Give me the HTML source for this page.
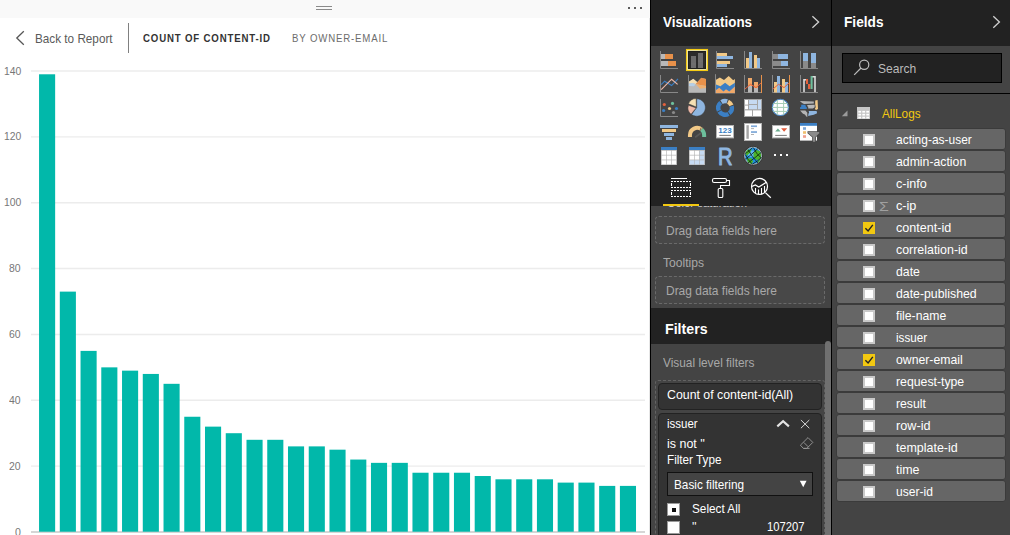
<!DOCTYPE html>
<html lang="en">
<head>
<meta charset="utf-8">
<title>Power BI - Count of content-id by owner-email</title>
<style>
html,body{margin:0;padding:0;background:#fff;}
body{width:1010px;height:535px;overflow:hidden;font-family:"Liberation Sans",sans-serif;}
#app{position:relative;width:1010px;height:535px;overflow:hidden;background:#fff;}
.a{position:absolute;}
.t{position:absolute;white-space:pre;line-height:20px;transform-origin:0 50%;}
svg{position:absolute;left:0;top:0;overflow:visible;}
.fi{left:836px;width:170px;height:22px;box-sizing:border-box;background:#666;border:1px solid #3b3b3b;border-radius:3px;}
.cb{width:12px;height:12px;box-sizing:border-box;background:#fff;border:2px solid #c9c9c9;}

</style>
</head>
<body>
<div id="app">
<div class="a" id="topbar" style="left:0;top:0;width:650px;height:18px;background:#f9f9f9"></div>
<div class="a" style="left:316px;top:6px;width:16px;height:1px;background:#8a8a8a"></div>
<div class="a" style="left:316px;top:9px;width:16px;height:1px;background:#8a8a8a"></div>
<div class="a" style="left:628px;top:7px;width:2px;height:2px;background:#5c5c5c"></div>
<div class="a" style="left:634px;top:7px;width:2px;height:2px;background:#5c5c5c"></div>
<div class="a" style="left:640px;top:7px;width:2px;height:2px;background:#5c5c5c"></div>
<svg width="650" height="60" viewBox="0 0 650 60"><path d="M23.8 31.2 L16.8 38 L23.8 44.8" fill="none" stroke="#555" stroke-width="1.3"/></svg>
<span class="t" style="left:35.00px;top:29px;font-size:12.4px;color:#5a5a5a;transform:scaleX(0.9467);">Back to Report</span>
<div class="a" style="left:128px;top:23px;width:1px;height:30px;background:#808080"></div>
<span class="t" style="left:143.00px;top:29px;font-size:10.4px;color:#333;font-weight:700;letter-spacing:0.9px;transform:scaleX(0.9278);">COUNT OF CONTENT-ID</span>
<span class="t" style="left:292.20px;top:29px;font-size:10.4px;color:#6c6c6c;letter-spacing:0.9px;transform:scaleX(0.9283);">BY OWNER-EMAIL</span>
<svg id="chart" width="650" height="535" viewBox="0 0 650 535">
<line x1="31" x2="645" y1="466.14" y2="466.14" stroke="#ececec" stroke-width="1.4"/>
<line x1="31" x2="645" y1="400.28" y2="400.28" stroke="#ececec" stroke-width="1.4"/>
<line x1="31" x2="645" y1="334.43" y2="334.43" stroke="#ececec" stroke-width="1.4"/>
<line x1="31" x2="645" y1="268.57" y2="268.57" stroke="#ececec" stroke-width="1.4"/>
<line x1="31" x2="645" y1="202.71" y2="202.71" stroke="#ececec" stroke-width="1.4"/>
<line x1="31" x2="645" y1="136.85" y2="136.85" stroke="#ececec" stroke-width="1.4"/>
<line x1="31" x2="645" y1="70.99" y2="70.99" stroke="#ececec" stroke-width="1.4"/>
<line x1="31" x2="645" y1="532.00" y2="532.00" stroke="#c8c8c8" stroke-width="1.6"/>
<rect x="39.05" y="74.29" width="16.1" height="457.41" fill="#01b8aa"/>
<rect x="59.80" y="291.62" width="16.1" height="240.08" fill="#01b8aa"/>
<rect x="80.54" y="350.89" width="16.1" height="180.81" fill="#01b8aa"/>
<rect x="101.28" y="367.36" width="16.1" height="164.34" fill="#01b8aa"/>
<rect x="122.03" y="370.65" width="16.1" height="161.05" fill="#01b8aa"/>
<rect x="142.78" y="373.94" width="16.1" height="157.76" fill="#01b8aa"/>
<rect x="163.52" y="383.82" width="16.1" height="147.88" fill="#01b8aa"/>
<rect x="184.26" y="416.75" width="16.1" height="114.95" fill="#01b8aa"/>
<rect x="205.01" y="426.63" width="16.1" height="105.07" fill="#01b8aa"/>
<rect x="225.75" y="433.21" width="16.1" height="98.49" fill="#01b8aa"/>
<rect x="246.50" y="439.80" width="16.1" height="91.90" fill="#01b8aa"/>
<rect x="267.25" y="439.80" width="16.1" height="91.90" fill="#01b8aa"/>
<rect x="287.99" y="446.38" width="16.1" height="85.32" fill="#01b8aa"/>
<rect x="308.74" y="446.38" width="16.1" height="85.32" fill="#01b8aa"/>
<rect x="329.48" y="449.68" width="16.1" height="82.02" fill="#01b8aa"/>
<rect x="350.23" y="459.56" width="16.1" height="72.14" fill="#01b8aa"/>
<rect x="370.97" y="462.85" width="16.1" height="68.85" fill="#01b8aa"/>
<rect x="391.72" y="462.85" width="16.1" height="68.85" fill="#01b8aa"/>
<rect x="412.46" y="472.73" width="16.1" height="58.97" fill="#01b8aa"/>
<rect x="433.21" y="472.73" width="16.1" height="58.97" fill="#01b8aa"/>
<rect x="453.95" y="472.73" width="16.1" height="58.97" fill="#01b8aa"/>
<rect x="474.70" y="476.02" width="16.1" height="55.68" fill="#01b8aa"/>
<rect x="495.44" y="479.31" width="16.1" height="52.39" fill="#01b8aa"/>
<rect x="516.19" y="479.31" width="16.1" height="52.39" fill="#01b8aa"/>
<rect x="536.93" y="479.31" width="16.1" height="52.39" fill="#01b8aa"/>
<rect x="557.67" y="482.61" width="16.1" height="49.09" fill="#01b8aa"/>
<rect x="578.42" y="482.61" width="16.1" height="49.09" fill="#01b8aa"/>
<rect x="599.16" y="485.90" width="16.1" height="45.80" fill="#01b8aa"/>
<rect x="619.91" y="485.90" width="16.1" height="45.80" fill="#01b8aa"/>
</svg>
<span class="t" style="left:15.00px;top:522px;font-size:10.8px;color:#777;transform:scaleX(0.9808);">0</span>
<span class="t" style="left:9.30px;top:456px;font-size:10.8px;color:#777;transform:scaleX(0.9654);">20</span>
<span class="t" style="left:9.30px;top:390px;font-size:10.8px;color:#777;transform:scaleX(0.9654);">40</span>
<span class="t" style="left:9.30px;top:324px;font-size:10.8px;color:#777;transform:scaleX(0.9654);">60</span>
<span class="t" style="left:9.30px;top:258px;font-size:10.8px;color:#777;transform:scaleX(0.9654);">80</span>
<span class="t" style="left:3.60px;top:192px;font-size:10.8px;color:#777;transform:scaleX(0.9603);">100</span>
<span class="t" style="left:3.60px;top:126px;font-size:10.8px;color:#777;transform:scaleX(0.9603);">120</span>
<span class="t" style="left:3.60px;top:61px;font-size:10.8px;color:#777;transform:scaleX(0.9603);">140</span>
<div class="a" style="left:649px;top:18px;width:1px;height:517px;background:#e6e6e6"></div>
<div class="a" id="vizpanel" style="left:650px;top:0;width:181px;height:535px;background:#444;border-left:1px solid #000;box-sizing:border-box"></div>
<div class="a" style="left:651px;top:0;width:180px;height:46px;background:#222"></div>
<span class="t" style="left:663.00px;top:12px;font-size:14.8px;color:#fff;font-weight:700;transform:scaleX(0.9044);">Visualizations</span>
<svg width="1010" height="60" viewBox="0 0 1010 60"><path d="M812.4 16.3 L818.6 22 L812.4 27.7" fill="none" stroke="#d0d0d0" stroke-width="1.3"/></svg>
<svg id="icons" width="1010" height="535" viewBox="0 0 1010 535">
<path d="M660.5 51 V68.5 H678" fill="none" stroke="#888888" stroke-width="1"/>
<rect x="661" y="54" width="4" height="5" fill="#b9b9b9" />
<rect x="665" y="54" width="8" height="5" fill="#e8914a" />
<rect x="661" y="61" width="7" height="5" fill="#b9b9b9" />
<rect x="668" y="61" width="8" height="5" fill="#e8914a" />
<rect x="686.5" y="49.5" width="21" height="21" fill="#1f1f1f" stroke="#f5cb14" stroke-width="1.1"/>
<rect x="687.5" y="50.5" width="19" height="19" fill="#1f1f1f" stroke="#fff5a8" stroke-width="0.9"/>
<rect x="689" y="52" width="16" height="16" fill="#2b2b2b" />
<rect x="691" y="56" width="5" height="12" fill="#6c6c6c" />
<rect x="698" y="53" width="5" height="15" fill="#6c6c6c" />
<rect x="691" y="63.6" width="5" height="0.6" fill="#777" />
<rect x="698" y="60.8" width="5" height="0.6" fill="#777" />
<path d="M716.5 51 V68.5 H734" fill="none" stroke="#888888" stroke-width="1"/>
<rect x="717" y="53" width="10" height="3" fill="#f2c987" />
<rect x="717" y="56" width="16" height="3" fill="#8fb6e0" />
<rect x="717" y="61" width="13" height="3" fill="#f2c987" />
<rect x="717" y="64" width="10" height="3" fill="#8fb6e0" />
<path d="M744.5 51 V68.5 H762" fill="none" stroke="#888888" stroke-width="1"/>
<rect x="746" y="58" width="3" height="10" fill="#f2c987" />
<rect x="749" y="52" width="3" height="16" fill="#8fb6e0" />
<rect x="754" y="55" width="3" height="13" fill="#f2c987" />
<rect x="757" y="58" width="3" height="10" fill="#8fb6e0" />
<path d="M772.5 51 V68.5 H790" fill="none" stroke="#888888" stroke-width="1"/>
<rect x="773" y="54" width="5" height="5" fill="#8a8a8a" />
<rect x="778" y="54" width="10" height="5" fill="#8fb6e0" />
<rect x="773" y="61" width="8" height="5" fill="#8a8a8a" />
<rect x="781" y="61" width="7" height="5" fill="#8fb6e0" />
<path d="M800.5 51 V68.5 H818" fill="none" stroke="#888888" stroke-width="1"/>
<rect x="803" y="53" width="5" height="8" fill="#8fb6e0" />
<rect x="803" y="61" width="5" height="7" fill="#8a8a8a" />
<rect x="811" y="53" width="5" height="10" fill="#8fb6e0" />
<rect x="811" y="63" width="5" height="5" fill="#8a8a8a" />
<path d="M660.5 75 V92.5 H678" fill="none" stroke="#888888" stroke-width="1"/>
<path d="M661.2 84.6 L664.6 81.2 L671.6 85.6 L678 78.8" fill="none" stroke="#3b7fc4" stroke-width="1.2"/>
<path d="M661.2 89.6 L671.6 79.2 L677.6 84.4" fill="none" stroke="#efb9a8" stroke-width="1.2"/>
<path d="M688.5 75 V92.5 H706" fill="none" stroke="#888888" stroke-width="1"/>
<path d="M689 82 L693.3 79 L697.2 82.2 L701.3 78 L706 79 V92.6 H689 Z" fill="#b9b9b9"/>
<path d="M689 81.6 L693.3 78.8 L697.2 82 L695.5 84 L692.7 83.1 L689 83.6 Z" fill="#f5e0b4"/>
<path d="M689 83.6 L692.7 83.1 L695.5 84.4 L694 86.2 L689 86 Z" fill="#b5cfe8"/>
<path d="M697.3 82.2 L701.3 77.8 L706 78.9 V86 L700.2 85 L695.7 83.9 Z" fill="#e8914a"/>
<path d="M695.7 83.9 L700.2 85 L706 86 V88.1 L699.9 88.7 Z" fill="#efb070"/>
<path d="M715.5 74.2 V93.1 H735" fill="none" stroke="#888888" stroke-width="1"/>
<path d="M716 79.8 L719.9 77.4 L724 80 L728.7 76.1 L733.2 80.3 L734.9 78.9 V93 H716 Z" fill="#f2c987"/>
<path d="M716 84.5 L720.4 86.2 L725.1 82.7 L729.6 86.2 L734.9 82.7 V93 H716 Z" fill="#3b7fc4"/>
<path d="M716 90 L719.3 87.7 L723.5 91.4 L726 89.2 L729.3 91.4 L734.9 86.4 V93 H716 Z" fill="#f0a868"/>
<path d="M744.5 75 V92.5 H761.5" fill="none" stroke="#888888" stroke-width="1"/>
<rect x="761" y="75" width="1" height="18" fill="#e8914a" />
<rect x="748" y="78" width="4" height="8" fill="#f0a868" />
<rect x="748" y="86" width="4" height="6.5" fill="#b9b9b9" />
<rect x="754" y="82" width="4" height="6" fill="#f0a868" />
<rect x="754" y="88" width="4" height="4.5" fill="#b9b9b9" />
<path d="M745 89 L750.5 84.3 L756 87.6 L761 83" fill="none" stroke="#e5613c" stroke-width="1"/>
<path d="M772.5 75 V92.5 H789.5" fill="none" stroke="#888888" stroke-width="1"/>
<rect x="789" y="75" width="1" height="18" fill="#e8914a" />
<rect x="774" y="82" width="3" height="10.5" fill="#f2c987" />
<rect x="777" y="76" width="3" height="16.5" fill="#8fb6e0" />
<rect x="782" y="79" width="3" height="13.5" fill="#f2c987" />
<rect x="785" y="82" width="3" height="10.5" fill="#8fb6e0" />
<path d="M773 89 L778.5 84.3 L784 87.6 L789 83" fill="none" stroke="#e5613c" stroke-width="1"/>
<path d="M800.5 75 V92.5 H818" fill="none" stroke="#888888" stroke-width="1"/>
<path d="M804 92 V79.8 H806.5" fill="none" stroke="#ddd" stroke-width="1.6"/>
<path d="M811 76.8 H815 V92" fill="none" stroke="#ddd" stroke-width="1.6"/>
<rect x="806" y="79" width="2" height="5" fill="#e5613c" />
<rect x="808" y="84" width="2.4" height="5" fill="#e5613c" />
<rect x="810.6" y="76" width="2" height="13" fill="#6dbf9c" />
<path d="M660.5 99 V116.5 H678" fill="none" stroke="#888888" stroke-width="1"/>
<circle cx="664.3" cy="104.5" r="1.6" fill="#e5613c"/>
<circle cx="672.5" cy="103.4" r="1.6" fill="#6dbf9c"/>
<circle cx="663.6" cy="110.5" r="1.6" fill="#3b7fc4"/>
<circle cx="669.5" cy="108.5" r="1.6" fill="#f2c987"/>
<circle cx="676.5" cy="108.5" r="1.6" fill="#3b7fc4"/>
<circle cx="673.5" cy="112.5" r="1.6" fill="#8a8a8a"/>
<path d="M696.70 107.50 L696.70 98.80 A8.7 8.7 0 1 1 691.59 114.54 Z" fill="#8fb6e0" stroke="#3c3c3c" stroke-width="0.5"/>
<path d="M696.20 107.90 L691.04 114.27 A8.2 8.2 0 0 1 688.45 105.23 Z" fill="#efb9a8" stroke="#3c3c3c" stroke-width="0.5"/>
<path d="M696.30 107.00 L688.42 103.82 A8.5 8.5 0 0 1 696.15 98.50 Z" fill="#f5e0b4" stroke="#3c3c3c" stroke-width="0.5"/>
<path d="M721.50 102.13 A6.8 6.8 0 0 1 727.20 101.43" fill="none" stroke="#8fb6e0" stroke-width="4.4"/>
<path d="M727.97 101.74 A6.8 6.8 0 0 1 731.40 105.35" fill="none" stroke="#f2c987" stroke-width="4.4"/>
<path d="M731.67 106.14 A6.8 6.8 0 0 1 729.19 113.33" fill="none" stroke="#3b7fc4" stroke-width="4.4"/>
<path d="M728.50 113.79 A6.8 6.8 0 0 1 719.33 111.50" fill="none" stroke="#3b7fc4" stroke-width="4.4"/>
<path d="M718.94 110.77 A6.8 6.8 0 0 1 720.73 102.69" fill="none" stroke="#3b7fc4" stroke-width="4.4"/>
<rect x="744" y="99" width="18" height="18" fill="#a6a6a6" />
<rect x="745" y="100" width="3" height="4.6" fill="#fff" />
<rect x="745" y="105.6" width="3" height="3.6" fill="#fff" />
<rect x="749" y="100" width="8" height="4" fill="#c6daf2" />
<rect x="749" y="105" width="8" height="4.2" fill="#c6daf2" />
<rect x="758" y="100" width="3" height="9.2" fill="#c6daf2" />
<rect x="745" y="110.4" width="7" height="5.6" fill="#fff" />
<rect x="753" y="110.4" width="8" height="5.6" fill="#fff" />
<circle cx="780.4" cy="107.4" r="8.1" fill="#fff" stroke="#4a88c8" stroke-width="1.1"/>
<path d="M773.2 103.5 H787.6 M772.2 107.4 H788.6 M773.2 111.4 H787.6 M777.3 100 V114.8 M783.6 100 V114.8" fill="none" stroke="#a4cdb6" stroke-width="1"/>
<path d="M799.8 101.1 L813.8 101.4 L813.8 103.6 L804 103.9 L802.1 102.9 Z" fill="#b4b4b4"/>
<path d="M801.2 104.8 L805.4 104.8 L805.9 106.7 L806.8 107.2 L806.8 109 L800.1 109 L800.1 107.2 L801.2 106.7 Z" fill="#3b7fc4"/>
<path d="M807.3 105.1 L814.7 104.8 L814.7 107.2 L812.9 108.6 L808.2 108.6 L808.2 106.7 L807.3 106.2 Z" fill="#b8b8b8"/>
<path d="M815.2 100.6 L817.6 100.1 L818 109 L816.1 110 L814.8 109 L815.7 107.2 L815.2 104.4 Z" fill="#f2c987"/>
<path d="M800.1 110.4 L805.4 110.4 L807.3 112.8 L807.3 117 L806.3 116.5 L804.9 114.6 L803 113.7 L801.6 112.3 Z" fill="#b4b4b4"/>
<path d="M808.7 110.9 L816.6 110.9 L817.1 113.2 L813.8 114.8 L810.1 115.4 L808.2 116 L808.4 113.7 L809.1 112.8 Z" fill="#8fb6e0"/>
<rect x="660" y="125" width="18" height="3" fill="#8fb6e0" />
<rect x="662" y="129" width="14" height="3" fill="#f2c987" />
<rect x="664" y="133" width="10" height="3" fill="#8fb6e0" />
<rect x="666" y="137" width="6" height="3" fill="#8fb6e0" />
<path d="M689.95 137.1 V135.2 A7.1 7.35 0 0 1 701.6 129.6" fill="none" stroke="#f2c987" stroke-width="4"/>
<path d="M701.6 129.6 A7.1 7.35 0 0 1 704.15 135.2 V137.1" fill="none" stroke="#6dbf9c" stroke-width="4"/>
<path d="M701.2 127.6 L699.6 131.4" stroke="#444" stroke-width="0.7" fill="none"/>
<path d="M695.2 137.2 L701 133" stroke="#585858" stroke-width="1.8" fill="none"/>
<rect x="716.5" y="125.5" width="17" height="12.4" fill="#fff" stroke="#b5b5b5" stroke-width="1"/>
<text x="725" y="133.2" font-family="Liberation Sans, sans-serif" font-size="7.4" font-weight="700" fill="#3b7fc4" text-anchor="middle" textLength="13.4" lengthAdjust="spacingAndGlyphs">123</text>
<path d="M719.4 135.4 H730.8" stroke="#555" stroke-width="0.8"/>
<rect x="744.5" y="123.5" width="17" height="17" fill="#fff" stroke="#b5b5b5" stroke-width="1"/>
<rect x="746.4" y="125.2" width="2.4" height="13.6" fill="#a6a6a6" />
<rect x="751" y="125.4" width="6" height="1.7" fill="#7ea8d8" />
<rect x="751" y="128.2" width="3" height="0.9" fill="#aaa" />
<rect x="751" y="131.2" width="6" height="1.7" fill="#7ea8d8" />
<rect x="751" y="134.1" width="3" height="0.9" fill="#aaa" />
<rect x="772.5" y="125.5" width="17" height="12.4" fill="#fff" stroke="#b5b5b5" stroke-width="1"/>
<path d="M775.2 131.5 L777.9 128.4 L780.6 131.5 Z" fill="#6aab8e"/>
<path d="M781.1 128.2 L787.2 128.2 L784.1 131.7 Z" fill="#e05a3a"/>
<path d="M775.2 135.4 H786.8" stroke="#555" stroke-width="0.8"/>
<rect x="800" y="123" width="17" height="17.6" fill="#fff"/>
<rect x="800" y="123" width="17" height="2.8" fill="#3b7fc4" />
<rect x="803" y="127.2" width="3" height="2.6" fill="#7ea8d8" />
<rect x="803" y="131.2" width="3" height="2.6" fill="#f0c070" />
<rect x="803" y="135.2" width="3" height="2.6" fill="#efa090" />
<path d="M808.2 131.9 H819.2 V133.3 L815.2 137 V141.7 H812.9 V137 L808.2 132.9 Z" fill="#8a8a8a" stroke="#444" stroke-width="1.4" paint-order="stroke"/>
<rect x="661" y="147" width="16" height="18" fill="#b4b4b4" />
<rect x="661" y="147" width="16" height="3" fill="#3b7fc4" />
<rect x="661.7" y="150.7" width="4.4" height="4.1" fill="#fff" />
<rect x="666.7" y="150.7" width="4.4" height="4.1" fill="#fff" />
<rect x="671.7" y="150.7" width="4.4" height="4.1" fill="#fff" />
<rect x="661.7" y="155.5" width="4.4" height="4.1" fill="#fff" />
<rect x="666.7" y="155.5" width="4.4" height="4.1" fill="#fff" />
<rect x="671.7" y="155.5" width="4.4" height="4.1" fill="#fff" />
<rect x="661.7" y="160.3" width="4.4" height="4.1" fill="#fff" />
<rect x="666.7" y="160.3" width="4.4" height="4.1" fill="#fff" />
<rect x="671.7" y="160.3" width="4.4" height="4.1" fill="#fff" />
<rect x="689" y="147" width="16" height="18" fill="#b4b4b4" />
<rect x="689" y="147" width="16" height="3" fill="#3b7fc4" />
<rect x="689.7" y="150.7" width="4.4" height="4.1" fill="#fff" />
<rect x="694.7" y="150.7" width="4.4" height="4.1" fill="#fff" />
<rect x="699.7" y="150.7" width="4.4" height="4.1" fill="#c6daf2" />
<rect x="689.7" y="155.5" width="4.4" height="4.1" fill="#fff" />
<rect x="694.7" y="155.5" width="4.4" height="4.1" fill="#fff" />
<rect x="699.7" y="155.5" width="4.4" height="4.1" fill="#c6daf2" />
<rect x="689.7" y="160.3" width="4.4" height="4.1" fill="#c6daf2" />
<rect x="694.7" y="160.3" width="4.4" height="4.1" fill="#c6daf2" />
<rect x="699.7" y="160.3" width="4.4" height="4.1" fill="#c6daf2" />
<text x="718" y="164.6" font-family="Liberation Sans, sans-serif" font-size="24" font-weight="400" fill="#8fb6e0" stroke="#8fb6e0" stroke-width="1" stroke-linejoin="round" textLength="14.6" lengthAdjust="spacingAndGlyphs">R</text>
<circle cx="753.1" cy="155.8" r="9.4" fill="none" stroke="#2a2a2a" stroke-width="0.8" stroke-dasharray="1.2 1.2"/>
<circle cx="753.1" cy="155.8" r="8.5" fill="#1f8fe0" stroke="#d8d8d8" stroke-width="0.7"/>
<ellipse cx="751.8" cy="153.8" rx="4" ry="3.2" fill="#5cb8f2"/>
<path d="M745.4 152.6 L747.6 149.8 L751.8 149.4 L750.2 152.6 L746.6 156 Z M753.4 153.4 L755.8 150 L759.8 151 L761.2 155 L760.4 159.4 L757 160 L753.6 157.6 Z M746.8 158.8 L751.4 158 L753.2 161.8 L751 164 L747.6 161.8 Z M757.6 160.6 L760.2 160 L758.6 163 Z" fill="#4cb42a"/>
<path d="M745.2 153.6 Q750 151 752.4 147.6 M745 159.4 Q752 154.4 757.8 148.6 M747.8 163 Q755 158 761.2 152.4 M752.4 164.2 Q758 161 761.4 157.6 M748 149.6 Q751.6 156.6 758 163 M753.4 147.6 Q756 153.6 761.2 158 M745.2 154.4 Q747.8 160 752.2 164" fill="none" stroke="#0a1a10" stroke-width="0.9" stroke-opacity="0.85"/>
<rect x="774" y="154" width="2" height="2" fill="#fff" />
<rect x="780" y="154" width="2" height="2" fill="#fff" />
<rect x="786" y="154" width="2" height="2" fill="#fff" />
</svg>
<div class="a" style="left:651px;top:170px;width:180px;height:36px;background:#222"></div>
<div class="a" style="left:663px;top:204px;width:36px;height:2px;background:#f2c811"></div>
<svg id="tabs" width="1010" height="535" viewBox="0 0 1010 535">
<g shape-rendering="crispEdges" stroke="#fff" stroke-width="1" fill="none"><path d="M671 178.5 H687"/><path d="M671 181.5 H691 M671 187.5 H691 M671 190.5 H691 M671 196.5 H691" stroke-dasharray="2 1"/><path d="M671.5 183 V186 M690.5 183 V186 M671.5 192 V195 M690.5 192 V195"/></g>
<rect x="712.5" y="178.5" width="14" height="4" rx="1.6" fill="none" stroke="#fff" stroke-width="1.1"/>
<path d="M726.5 180.5 H729.5 V185.5 H720.5 V188.5" fill="none" stroke="#fff" stroke-width="1.1"/>
<rect x="718.2" y="188.5" width="4.6" height="9" rx="1" fill="none" stroke="#fff" stroke-width="1.1"/>
<circle cx="759.5" cy="186.4" r="8" fill="none" stroke="#fff" stroke-width="1.2"/>
<path d="M765.4 192.6 L770.8 197.8" stroke="#fff" stroke-width="1.3" fill="none"/>
<path d="M752 186.4 L755.4 185 L758.8 187 L766.4 182.2" stroke="#fff" stroke-width="1.2" fill="none"/>
<path d="M755.5 188 V193.4 M758.5 189.4 V194.4 M761.5 188 V194.2 M764.5 186 V192.6" stroke="#fff" stroke-width="1.1" fill="none"/>
</svg>
<div class="a" style="left:651px;top:206px;width:180px;height:2.4px;overflow:hidden"><span class="t" style="left:16.40px;top:-13px;font-size:12.4px;color:#c8c8c8;transform:scaleX(0.9146);">Color saturation</span></div>
<div class="a" style="left:655px;top:216px;width:170px;height:28px;box-sizing:border-box;border:1px dashed #6a6a6a;border-radius:4px;background:#484848"></div>
<span class="t" style="left:666.00px;top:221px;font-size:12.4px;color:#a8a8a8;transform:scaleX(0.9650);">Drag data fields here</span>
<span class="t" style="left:663.20px;top:253px;font-size:12.4px;color:#a8a8a8;transform:scaleX(0.9758);">Tooltips</span>
<div class="a" style="left:655px;top:276px;width:170px;height:28px;box-sizing:border-box;border:1px dashed #6a6a6a;border-radius:4px;background:#484848"></div>
<span class="t" style="left:666.00px;top:281px;font-size:12.4px;color:#a8a8a8;transform:scaleX(0.9650);">Drag data fields here</span>
<div class="a" style="left:651px;top:308px;width:180px;height:36px;background:#222"></div>
<span class="t" style="left:665.00px;top:319px;font-size:14.8px;color:#fff;font-weight:700;transform:scaleX(0.9593);">Filters</span>
<span class="t" style="left:663.00px;top:353px;font-size:12.4px;color:#a8a8a8;transform:scaleX(0.9571);">Visual level filters</span>
<div class="a" style="left:655px;top:380px;width:170px;height:170px;box-sizing:border-box;border:1px dashed #636363;border-radius:3px;"></div>
<div class="a" style="left:825px;top:341px;width:6px;height:200px;background:#707070;border-radius:3px 3px 0 0"></div>
<div class="a" style="left:658px;top:383px;width:164.4px;height:27px;box-sizing:border-box;border:1px solid #222;border-radius:4px;background:#333"></div>
<span class="t" style="left:666.50px;top:385px;font-size:12.6px;color:#fff;transform:scaleX(0.9797);">Count of content-id(All)</span>
<div class="a" style="left:658px;top:412.6px;width:164.4px;height:140px;box-sizing:border-box;border:1px solid #222;border-radius:4px;background:#333"></div>
<span class="t" style="left:667.20px;top:414px;font-size:12.6px;color:#fff;transform:scaleX(0.9109);">issuer</span>
<span class="t" style="left:667.20px;top:434px;font-size:12.6px;color:#fff;transform:scaleX(0.9890);">is not &#x27;&#x27;</span>
<span class="t" style="left:667.20px;top:450px;font-size:12.6px;color:#fff;transform:scaleX(0.9289);">Filter Type</span>
<div class="a" style="left:667px;top:472px;width:146px;height:24px;box-sizing:border-box;border:1px solid #111;background:#444"></div>
<span class="t" style="left:674.20px;top:475px;font-size:12.6px;color:#fff;transform:scaleX(0.9345);">Basic filtering</span>
<svg id="ficons" width="1010" height="535" viewBox="0 0 1010 535">
<path d="M777.3 426.4 L783.1 421.2 L788.9 426.4" fill="none" stroke="#e4e4e4" stroke-width="2.1"/>
<path d="M800.9 420 L809.3 428.2 M809.3 420 L800.9 428.2" fill="none" stroke="#d8d8d8" stroke-width="1"/>
<path d="M808 437.6 L812.8 442.4 L806.8 448.4 H803.4 L800.4 445.2 Z M803.8 442.4 L808.2 446.8 M803.4 448.4 H809.6" fill="none" stroke="#9a9a9a" stroke-width="0.9"/>
<path d="M799.8 480.8 H806.6 L803.2 487.2 Z" fill="#fff"/>
</svg>
<div class="a" style="left:667px;top:503px;width:13px;height:13px;box-sizing:border-box;border:1.4px solid #9a9a9a;background:#fff"></div>
<div class="a" style="left:671.5px;top:507.5px;width:4px;height:4px;background:#111"></div>
<span class="t" style="left:692.00px;top:499px;font-size:12.6px;color:#fff;transform:scaleX(0.9341);">Select All</span>
<div class="a" style="left:667px;top:521px;width:13px;height:13px;box-sizing:border-box;border:1.4px solid #9a9a9a;background:#fff"></div>
<span class="t" style="left:692.00px;top:517px;font-size:12.6px;color:#fff;transform:scaleX(0.9558);">&#x27;&#x27;</span>
<span class="t" style="left:767.20px;top:517px;font-size:12.6px;color:#fff;transform:scaleX(0.8946);">107207</span>
<div class="a" id="fieldspanel" style="left:831px;top:0;width:179px;height:535px;background:#444;border-left:1px solid #000;box-sizing:border-box"></div>
<div class="a" style="left:832px;top:0;width:178px;height:46px;background:#222"></div>
<span class="t" style="left:844.00px;top:12px;font-size:14.8px;color:#fff;font-weight:700;transform:scaleX(0.9236);">Fields</span>
<div class="a" style="left:842px;top:53px;width:160px;height:30px;box-sizing:border-box;border:1px solid #000;background:#222"></div>
<svg width="1010" height="100" viewBox="0 0 1010 100"><circle cx="864.2" cy="64.7" r="4.6" fill="none" stroke="#bdbdbd" stroke-width="1.2"/><path d="M861 68 L854.2 74.8" stroke="#bdbdbd" stroke-width="1.2" fill="none"/></svg>
<span class="t" style="left:878.00px;top:59px;font-size:13.2px;color:#bbb;transform:scaleX(0.9139);">Search</span>
<div class="a" style="left:832px;top:93px;width:178px;height:1px;background:#000"></div>
<svg width="1010" height="130" viewBox="0 0 1010 130"><path d="M847.5 110.6 V116.2 H841.8 Z" fill="#9a9a9a"/><rect x="857" y="107" width="13" height="12" fill="#c6c6c6"/><rect x="858.3" y="110.90" width="2.8" height="1.7" fill="#fff"/><rect x="862.3" y="110.90" width="2.8" height="1.7" fill="#fff"/><rect x="866.3" y="110.90" width="2.8" height="1.7" fill="#fff"/><rect x="858.3" y="113.80" width="2.8" height="1.7" fill="#fff"/><rect x="862.3" y="113.80" width="2.8" height="1.7" fill="#fff"/><rect x="866.3" y="113.80" width="2.8" height="1.7" fill="#fff"/><rect x="858.3" y="116.70" width="2.8" height="1.7" fill="#fff"/><rect x="862.3" y="116.70" width="2.8" height="1.7" fill="#fff"/><rect x="866.3" y="116.70" width="2.8" height="1.7" fill="#fff"/><path d="M993.3 16.3 L999.4 22 L993.3 27.7" fill="none" stroke="#d0d0d0" stroke-width="1.3"/></svg>
<span class="t" style="left:882.00px;top:104px;font-size:12.8px;color:#f2c811;transform:scaleX(0.9194);">AllLogs</span>
<div class="a fi" style="top:128px;"></div>
<div class="a cb" style="left:863px;top:134px;"></div>
<span class="t" style="left:895.60px;top:130px;font-size:12.8px;color:#fff;transform:scaleX(0.9347);">acting-as-user</span>
<div class="a fi" style="top:150px;"></div>
<div class="a cb" style="left:863px;top:156px;"></div>
<span class="t" style="left:895.60px;top:152px;font-size:12.8px;color:#fff;transform:scaleX(0.9582);">admin-action</span>
<div class="a fi" style="top:172px;"></div>
<div class="a cb" style="left:863px;top:178px;"></div>
<span class="t" style="left:895.60px;top:174px;font-size:12.8px;color:#fff;transform:scaleX(0.9841);">c-info</span>
<div class="a fi" style="top:194px;"></div>
<div class="a cb" style="left:863px;top:200px;"></div>
<span class="t" style="left:879.40px;top:197px;font-size:12.6px;color:#a0a0a0;transform:scaleX(1.2569);">Σ</span>
<span class="t" style="left:895.60px;top:196px;font-size:12.8px;color:#fff;transform:scaleX(0.9891);">c-ip</span>
<div class="a fi" style="top:216px;"></div>
<div class="a" style="left:863px;top:222px;width:12px;height:12px;background:#f2c811"></div>
<svg width="1010" height="535" viewBox="0 0 1010 535"><path d="M865.4 228.2 L868.1 231 L872.8 224.8" fill="none" stroke="#222" stroke-width="1.4"/></svg>
<span class="t" style="left:895.60px;top:218px;font-size:12.8px;color:#fff;transform:scaleX(0.9822);">content-id</span>
<div class="a fi" style="top:238px;"></div>
<div class="a cb" style="left:863px;top:244px;"></div>
<span class="t" style="left:895.60px;top:240px;font-size:12.8px;color:#fff;transform:scaleX(0.9691);">correlation-id</span>
<div class="a fi" style="top:260px;"></div>
<div class="a cb" style="left:863px;top:266px;"></div>
<span class="t" style="left:895.60px;top:262px;font-size:12.8px;color:#fff;transform:scaleX(0.9590);">date</span>
<div class="a fi" style="top:282px;"></div>
<div class="a cb" style="left:863px;top:288px;"></div>
<span class="t" style="left:895.60px;top:284px;font-size:12.8px;color:#fff;transform:scaleX(0.9611);">date-published</span>
<div class="a fi" style="top:304px;"></div>
<div class="a cb" style="left:863px;top:310px;"></div>
<span class="t" style="left:895.60px;top:306px;font-size:12.8px;color:#fff;transform:scaleX(0.9536);">file-name</span>
<div class="a fi" style="top:326px;"></div>
<div class="a cb" style="left:863px;top:332px;"></div>
<span class="t" style="left:895.60px;top:328px;font-size:12.8px;color:#fff;transform:scaleX(0.9109);">issuer</span>
<div class="a fi" style="top:348px;"></div>
<div class="a" style="left:863px;top:354px;width:12px;height:12px;background:#f2c811"></div>
<svg width="1010" height="535" viewBox="0 0 1010 535"><path d="M865.4 360.2 L868.1 363 L872.8 356.8" fill="none" stroke="#222" stroke-width="1.4"/></svg>
<span class="t" style="left:895.60px;top:350px;font-size:12.8px;color:#fff;transform:scaleX(0.9569);">owner-email</span>
<div class="a fi" style="top:370px;"></div>
<div class="a cb" style="left:863px;top:376px;"></div>
<span class="t" style="left:895.60px;top:372px;font-size:12.8px;color:#fff;transform:scaleX(0.9587);">request-type</span>
<div class="a fi" style="top:392px;"></div>
<div class="a cb" style="left:863px;top:398px;"></div>
<span class="t" style="left:895.60px;top:394px;font-size:12.8px;color:#fff;transform:scaleX(0.9554);">result</span>
<div class="a fi" style="top:414px;"></div>
<div class="a cb" style="left:863px;top:420px;"></div>
<span class="t" style="left:895.60px;top:416px;font-size:12.8px;color:#fff;transform:scaleX(0.9901);">row-id</span>
<div class="a fi" style="top:436px;"></div>
<div class="a cb" style="left:863px;top:442px;"></div>
<span class="t" style="left:895.60px;top:438px;font-size:12.8px;color:#fff;transform:scaleX(0.9745);">template-id</span>
<div class="a fi" style="top:458px;"></div>
<div class="a cb" style="left:863px;top:464px;"></div>
<span class="t" style="left:895.60px;top:460px;font-size:12.8px;color:#fff;transform:scaleX(0.9716);">time</span>
<div class="a fi" style="top:480px;"></div>
<div class="a cb" style="left:863px;top:486px;"></div>
<span class="t" style="left:895.60px;top:482px;font-size:12.8px;color:#fff;transform:scaleX(0.9431);">user-id</span>
</div>
</body>
</html>
